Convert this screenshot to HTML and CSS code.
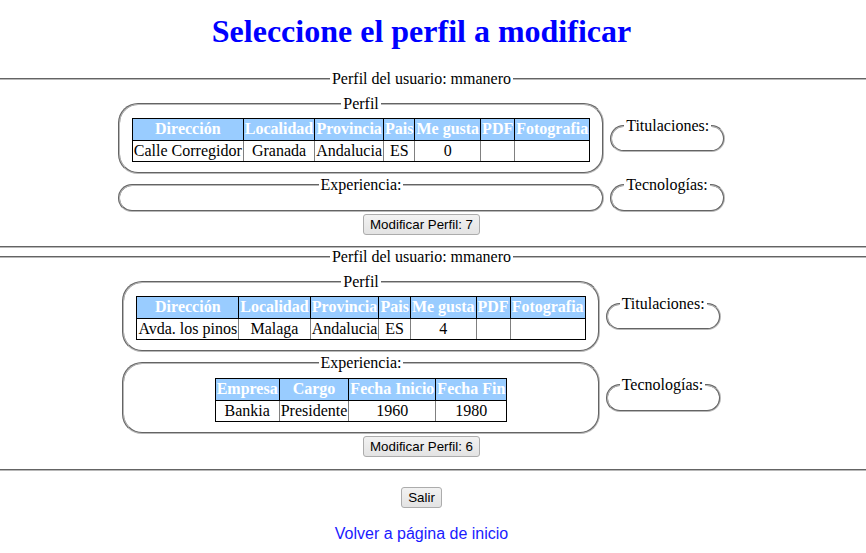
FILE: index.html
```html
<!DOCTYPE html>
<html lang="es">
<head>
<meta charset="utf-8">
<title>Seleccione el perfil a modificar</title>
<link rel="stylesheet" href="styles.css">
</head>
<body>
<div class="page">
  <h1 class="title">Seleccione el perfil a modificar</h1>

  <fieldset class="user">
    <legend class="center-legend">Perfil del usuario: mmanero</legend>
    <table class="layout">
      <tr>
        <td>
          <fieldset class="box">
            <legend class="center-legend">Perfil</legend>
            <table class="data">
              <tr><th>Dirección</th><th>Localidad</th><th>Provincia</th><th>Pais</th><th>Me gusta</th><th>PDF</th><th>Fotografia</th></tr>
              <tr><td>Calle Corregidor</td><td>Granada</td><td>Andalucia</td><td>ES</td><td>0</td><td></td><td></td></tr>
            </table>
          </fieldset>
        </td>
        <td>
          <fieldset class="box"><legend>Titulaciones:</legend></fieldset>
        </td>
      </tr>
      <tr>
        <td>
          <fieldset class="box"><legend class="center-legend">Experiencia:</legend></fieldset>
        </td>
        <td>
          <fieldset class="box"><legend>Tecnologías:</legend></fieldset>
        </td>
      </tr>
    </table>
    <div class="actions"><button class="btn" type="button">Modificar Perfil: 7</button></div>
  </fieldset>

  <fieldset class="user">
    <legend class="center-legend">Perfil del usuario: mmanero</legend>
    <table class="layout">
      <tr>
        <td>
          <fieldset class="box">
            <legend class="center-legend">Perfil</legend>
            <table class="data">
              <tr><th>Dirección</th><th>Localidad</th><th>Provincia</th><th>Pais</th><th>Me gusta</th><th>PDF</th><th>Fotografia</th></tr>
              <tr><td>Avda. los pinos</td><td>Malaga</td><td>Andalucia</td><td>ES</td><td>4</td><td></td><td></td></tr>
            </table>
          </fieldset>
        </td>
        <td>
          <fieldset class="box"><legend>Titulaciones:</legend></fieldset>
        </td>
      </tr>
      <tr>
        <td>
          <fieldset class="box">
            <legend class="center-legend">Experiencia:</legend>
            <table class="data">
              <tr><th>Empresa</th><th>Cargo</th><th>Fecha Inicio</th><th>Fecha Fin</th></tr>
              <tr><td>Bankia</td><td>Presidente</td><td>1960</td><td>1980</td></tr>
            </table>
          </fieldset>
        </td>
        <td>
          <fieldset class="box"><legend>Tecnologías:</legend></fieldset>
        </td>
      </tr>
    </table>
    <div class="actions"><button class="btn" type="button">Modificar Perfil: 6</button></div>
  </fieldset>

  <div class="footer">
    <button class="btn" type="button">Salir</button>
    <a class="home-link" href="#">Volver a página de inicio</a>
  </div>
</div>
</body>
</html>
```

FILE: styles.css
```css
html, body {
  margin: 0;
  padding: 0;
  background: #ffffff;
}

body {
  font-family: "Liberation Serif", "Times New Roman", serif;
  font-size: 16px;
  color: #000;
}

.page {
  width: 843px;
}

.title {
  margin: 13px 0 20px;
  font-size: 32px;
  font-weight: bold;
  color: #0000ff;
  text-align: center;
  line-height: 37px;
}

fieldset {
  border: 2px groove #b8b8b8;
}

legend {
  padding: 0 2px;
}

.center-legend {
  margin-left: auto;
  margin-right: auto;
}

.user {
  margin: 0 -23px 0 0;
  padding: 4.6px 23px 11.5px 0;
  border-left: none;
  border-right: none;
}

.layout {
  margin: 0 auto;
  border-collapse: separate;
  border-spacing: 2px;
}

.layout > tbody > tr > td {
  padding: 0;
  vertical-align: middle;
}

.box {
  margin: 0 2px;
  padding: 5.6px 12px 10px;
  border-radius: 20px;
}

.data {
  margin: 0 auto;
  border-collapse: separate;
  border-spacing: 0;
  border: 1px solid #000;
}

.data th,
.data td {
  padding: 1px;
  text-align: center;
  line-height: 18.5px;
}

.data th {
  background: #99ccff;
  color: #ffffff;
  font-weight: bold;
  border-bottom: 1px solid #000;
  border-right: 1px solid #000;
}

.data td {
  border-right: 1px solid #808080;
  font-weight: normal;
}

.data th:last-child,
.data td:last-child {
  border-right: none;
}

.actions {
  text-align: center;
}

.btn {
  font-family: "Liberation Sans", Arial, sans-serif;
  font-size: 13.33px;
  color: #000;
  height: 21px;
  padding: 0 6px;
  border: 1px solid #acacac;
  border-radius: 3px;
  background: linear-gradient(#f2f2f2, #e3e3e3);
  line-height: normal;
}

.footer {
  display: flex;
  flex-direction: column;
  align-items: center;
  gap: 17px;
  padding-top: 16px;
}

.home-link {
  font-family: "Liberation Sans", Arial, sans-serif;
  font-size: 16px;
  color: #1a1aff;
  text-decoration: none;
}
```
